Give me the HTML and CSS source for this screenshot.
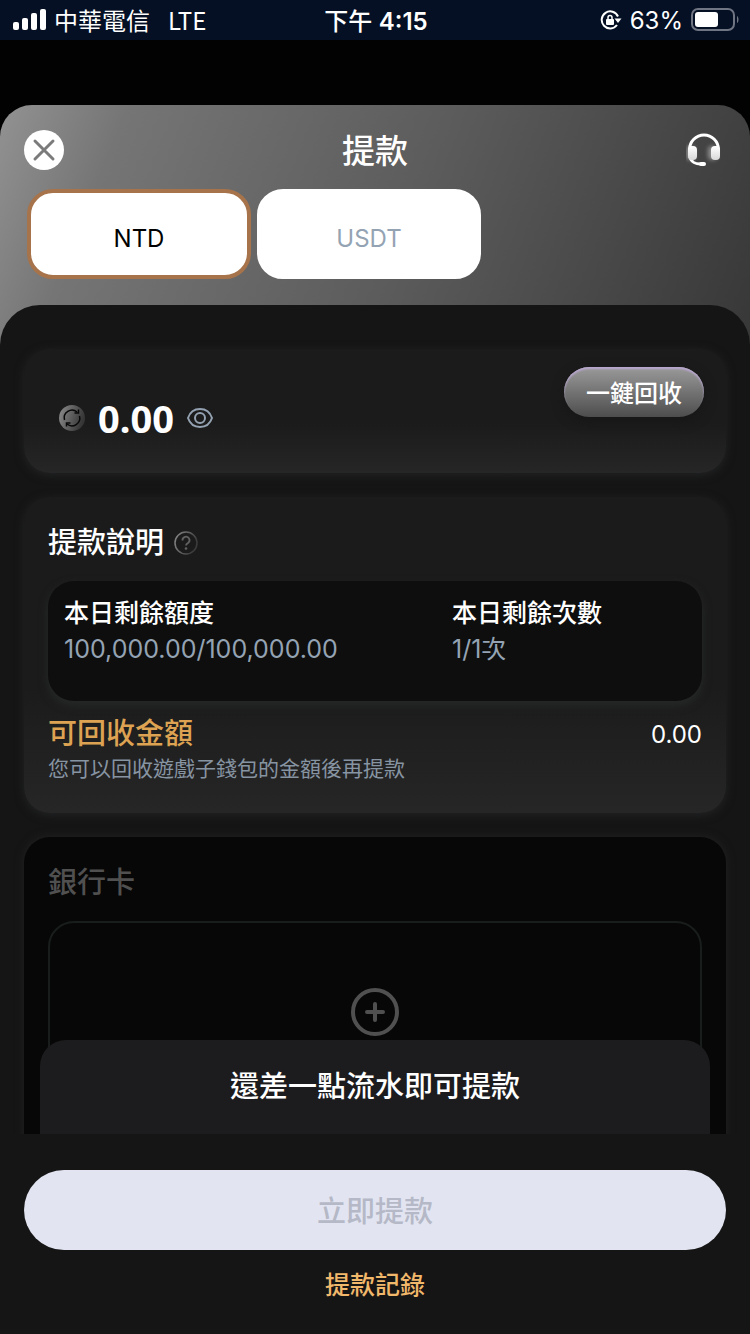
FILE: index.html
```html
<!DOCTYPE html>
<html lang="zh-Hant">
<head>
  <meta charset="UTF-8">
  <meta name="viewport" content="width=device-width, initial-scale=1">
  <title>提款</title>
  <link rel="stylesheet" href="styles.css">
</head>
<body>
  <!-- Status bar -->
  <div class="status-bar">
    <div class="status-left">
      <svg width="34" height="22" viewBox="0 0 34 22" fill="#fff">
        <rect x="1" y="13" width="6" height="8" rx="2"/>
        <rect x="10" y="9" width="6" height="12" rx="2"/>
        <rect x="19" y="4" width="6" height="17" rx="2"/>
        <rect x="28" y="0" width="6" height="21" rx="2"/>
      </svg>
      <span class="carrier">中華電信</span>
      <span>LTE</span>
    </div>
    <div class="status-time">下午 <span>4:15</span></div>
    <div class="status-right">
      <svg width="22" height="20" viewBox="0 0 22 20" fill="none" stroke="#fff" stroke-width="2">
        <path d="M18 6.500A8.500 8.500 0 1 0 17 15"/>
        <path d="M14.500 8.500h7L18 13z" fill="#fff" stroke="none"/>
        <rect x="6" y="9" width="8" height="6" rx="1" fill="#fff" stroke="none"/>
        <path d="M8 9.500V7.500a2 2 0 0 1 4 0v2" stroke-width="1.500"/>
      </svg>
      <span>63%</span>
      <svg width="49" height="24" viewBox="0 0 49 24">
        <rect x="1" y="1" width="42" height="21" rx="6" fill="none" stroke="#6f7582" stroke-width="2"/>
        <rect x="4" y="4" width="23" height="15" rx="3" fill="#fff"/>
        <path d="M46 8c2 1 2 6 0 7z" fill="#6f7582"/>
      </svg>
    </div>
  </div>

  <div class="sheet">
    <header class="sheet-header">
      <button class="icon-btn" type="button" aria-label="關閉">
        <svg width="40" height="40" viewBox="0 0 40 40">
          <circle cx="20" cy="20" r="20" fill="#fff"/>
          <path d="M11 11l18 18M29 11L11 29" stroke="#7b7b7b" stroke-width="3" stroke-linecap="round"/>
        </svg>
      </button>
      <h1>提款</h1>
      <button class="icon-btn" type="button" aria-label="客服">
        <svg width="40" height="40" viewBox="0 0 40 40">
          <defs>
            <linearGradient id="ear" x1="0" y1="0" x2="0" y2="1">
              <stop offset="0" stop-color="#fff"/>
              <stop offset="1" stop-color="#d8d8d8"/>
            </linearGradient>
            <filter id="glow" x="-50%" y="-50%" width="200%" height="200%">
              <feGaussianBlur stdDeviation="2"/>
            </filter>
          </defs>
          <g fill="#fff" opacity="0.4" filter="url(#glow)">
            <rect x="0" y="16" width="9" height="14" rx="4"/>
            <rect x="22" y="16" width="9" height="14" rx="4"/>
          </g>
          <path d="M3.500 22V19.500a14.500 14.500 0 0 1 29 0V22" fill="none" stroke="#fff" stroke-width="3"/>
          <path d="M4 27c1 5 6 7.500 12 7" fill="none" stroke="#fff" stroke-width="3"/>
          <rect x="13" y="32" width="7" height="4" rx="2" fill="#fff"/>
          <rect x="2" y="16" width="9" height="14" rx="4" fill="url(#ear)"/>
          <rect x="25" y="16" width="9" height="14" rx="4" fill="url(#ear)"/>
        </svg>
      </button>
    </header>

    <nav class="tabs">
      <button class="tab active" type="button">NTD</button>
      <button class="tab" type="button">USDT</button>
    </nav>

    <main class="panel">
      <div class="content">
        <!-- Balance -->
        <section class="card balance">
          <div class="amount-row">
            <button class="icon-btn" type="button" aria-label="重新整理">
              <svg width="28" height="28" viewBox="0 0 28 28">
                <defs>
                  <linearGradient id="ball" x1="0" y1="0" x2="1" y2="0.3">
                    <stop offset="0" stop-color="#8f8f8f"/>
                    <stop offset="1" stop-color="#363636"/>
                  </linearGradient>
                </defs>
                <circle cx="14" cy="14" r="13" fill="url(#ball)"/>
                <g fill="none" stroke="#080808" stroke-width="1.500">
                  <path d="M6.500 16A7.800 7.800 0 0 1 19 8"/>
                  <path d="M20.500 5.500V9h-4"/>
                  <path d="M21.500 12A7.800 7.800 0 0 1 9 20"/>
                  <path d="M8.500 22.500V19h4"/>
                </g>
              </svg>
            </button>
            <span class="amount">0.00</span>
            <button class="icon-btn" type="button" aria-label="顯示餘額">
              <svg width="28" height="22" viewBox="0 0 28 22" fill="none" stroke="#93a1b1" stroke-width="2">
                <path d="M2 11C4 5 8 2 14 2s10 3 12 9c-2 6-6 9-12 9S4 17 2 11z"/>
                <circle cx="14" cy="11" r="5"/>
              </svg>
            </button>
          </div>
          <button class="recycle" type="button">一鍵回收</button>
        </section>

        <!-- Withdrawal info -->
        <section class="card info">
          <h2>
            提款說明
            <svg width="24" height="24" viewBox="0 0 24 24" fill="none">
              <defs>
                <linearGradient id="ring" x1="0" y1="0" x2="1" y2="0.4">
                  <stop offset="0" stop-color="#8a8a8a"/>
                  <stop offset="1" stop-color="#3c3c3c"/>
                </linearGradient>
              </defs>
              <circle cx="12" cy="12" r="11" stroke="url(#ring)" stroke-width="1.500"/>
              <path d="M8.500 9.500a3.500 3.500 0 1 1 5.500 2.500c-1.500 1-2 1.500-2 2.500" stroke="#626262" stroke-width="1.800"/>
              <circle cx="12" cy="17.500" r="1.300" fill="#626262"/>
            </svg>
          </h2>
          <div class="quota">
            <dl>
              <dt>本日剩餘額度</dt>
              <dd>100,000.00/100,000.00</dd>
            </dl>
            <dl>
              <dt>本日剩餘次數</dt>
              <dd>1/1次</dd>
            </dl>
          </div>
          <div class="recyclable">
            <h3>可回收金額</h3>
            <span>0.00</span>
          </div>
          <p class="hint">您可以回收遊戲子錢包的金額後再提款</p>
        </section>

        <!-- Bank card -->
        <section class="card bank">
          <h2>銀行卡</h2>
          <button class="add-card" type="button" aria-label="新增銀行卡">
            <svg width="48" height="48" viewBox="0 0 48 48" fill="none" stroke="#505050" stroke-width="4" stroke-linecap="round">
              <circle cx="24" cy="24" r="22"/>
              <path d="M24 16v16M16 24h16"/>
            </svg>
          </button>
        </section>
      </div>
      <div class="notice">還差一點流水即可提款</div>
    </main>
  </div>

  <footer class="footer">
    <button class="submit" type="button" disabled>立即提款</button>
    <a href="#">提款記錄</a>
  </footer>
</body>
</html>
```
FILE: styles.css
```css
* {
  box-sizing: border-box;
  margin: 0;
  padding: 0;
}
body {
  font-family: Inter, "Noto Sans CJK TC", sans-serif;
  font-size: 24px;
  color: #fff;
  background: #020202;
  height: 100vh;
  display: flex;
  flex-direction: column;
  overflow: hidden;
}
button {
  font-family: inherit;
  border: none;
  cursor: pointer;
}
svg {
  display: block;
}
.icon-btn {
  background: none;
}

/* Status bar */
.status-bar {
  height: 40px;
  background: #051024;
  display: grid;
  grid-template-columns: 1fr auto 1fr;
  align-items: center;
  padding: 0 10px 0 12px;
}
.status-left, .status-right {
  display: flex;
  align-items: center;
}
.status-left {
  gap: 18px;
  font-family: "Noto Sans CJK TC", sans-serif;
  line-height: 36px;
}
.carrier {
  margin-left: -10px;
}
.status-right {
  justify-content: flex-end;
  gap: 8px;
}
.status-time {
  font-weight: 500;
  padding-bottom: 2px;
}
.status-time span {
  font-weight: 600;
}

/* Sheet */
.sheet {
  flex: 1;
  min-height: 0;
  margin-top: 65px;
  border-radius: 32px 32px 0 0;
  background: linear-gradient(112deg, #929292 0, #757575 120px, #5c5c5c 420px, #303030 860px);
  display: flex;
  flex-direction: column;
}
.sheet-header {
  display: flex;
  align-items: center;
  justify-content: space-between;
  padding: 20px 24px 14px;
  height: 84px;
}
h1 {
  font-size: 33px;
  font-weight: 500;
  padding-bottom: 2px;
}
.tabs {
  display: flex;
  gap: 6px;
  padding: 0 27px 26px;
}
.tab {
  width: 224px;
  height: 90px;
  padding-top: 8px;
  border: 4px solid #fff;
  border-radius: 26px;
  background: #fff;
  color: #94a3b3;
  font-size: 24px;
}
.tab.active {
  border-color: #a6734a;
  color: #000;
}

/* Panel */
.panel {
  flex: 1;
  min-height: 0;
  position: relative;
  overflow: hidden;
  background: #151515;
  border-radius: 40px 40px 0 0;
}
.content {
  display: flex;
  flex-direction: column;
  gap: 24px;
  padding: 44px 24px 0;
}
.card {
  border-radius: 26px;
  padding: 24px;
  background: linear-gradient(#1b1b1b 60%, #262626);
  box-shadow: 0 2px 10px #232426;
}
.balance {
  height: 124px;
  display: flex;
  justify-content: space-between;
  align-items: flex-start;
  padding: 18px 22px 24px 34px;
}
.amount-row {
  display: flex;
  align-items: center;
  gap: 12px;
  margin-top: 25px;
}
.amount {
  font-family: "Noto Sans", sans-serif;
  font-size: 38px;
  line-height: 52px;
  font-weight: 700;
}
.recycle {
  width: 140px;
  height: 50px;
  padding-bottom: 2px;
  border-radius: 25px;
  background: linear-gradient(#9a9a9a, #4d4d4d);
  box-shadow: inset 0 2px 2px #b9a6d0, 0 4px 12px #171717;
  color: #fff;
  font-size: 24px;
  font-weight: 500;
}
h2 {
  font-size: 29px;
  line-height: 44px;
  font-weight: 500;
  display: flex;
  align-items: center;
  gap: 10px;
}
.info {
  height: 316px;
}
.quota {
  display: grid;
  grid-template-columns: 388px 1fr;
  height: 120px;
  margin: 16px 0 12px;
  padding: 14px 16px;
  border-radius: 26px;
  background: #0e0e0e;
  box-shadow: 0 4px 10px #272929;
}
.quota dt, .quota dd {
  font-size: 25px;
  line-height: 36px;
}
.quota dt {
  font-weight: 500;
}
.quota dd {
  color: #94a3b3;
}
.recyclable {
  display: flex;
  align-items: center;
  justify-content: space-between;
}
h3 {
  font-size: 29px;
  line-height: 42px;
  font-weight: 500;
  color: #dda352;
}
.hint {
  font-size: 21px;
  line-height: 28px;
  color: #8794a2;
}
.bank {
  background: #070707;
  height: 400px;
  box-shadow: 0 0 10px #222;
}
.bank h2 {
  color: #505050;
}
.add-card {
  width: 100%;
  height: 182px;
  margin-top: 16px;
  border: 2px solid #191e1d;
  border-radius: 26px;
  background: none;
  display: flex;
  align-items: center;
  justify-content: center;
}

/* Notice sticks to the bottom edge of the panel, over the cards */
.notice {
  position: absolute;
  left: 40px;
  right: 40px;
  bottom: 0;
  height: 94px;
  border-radius: 26px 26px 0 0;
  background: #1c1c1e;
  font-size: 29px;
  line-height: 94px;
  font-weight: 500;
  text-align: center;
}

/* Footer */
.footer {
  background: #151515;
  padding: 36px 24px 30px;
  display: flex;
  flex-direction: column;
  align-items: center;
  gap: 16px;
}
.submit {
  width: 100%;
  height: 80px;
  padding-bottom: 2px;
  border-radius: 40px;
  background: #e2e5f1;
  color: #b5b8c6;
  font-size: 29px;
  font-weight: 500;
}
.footer a {
  color: #f1b86b;
  font-size: 25px;
  line-height: 38px;
  font-weight: 500;
  text-decoration: none;
}
```
